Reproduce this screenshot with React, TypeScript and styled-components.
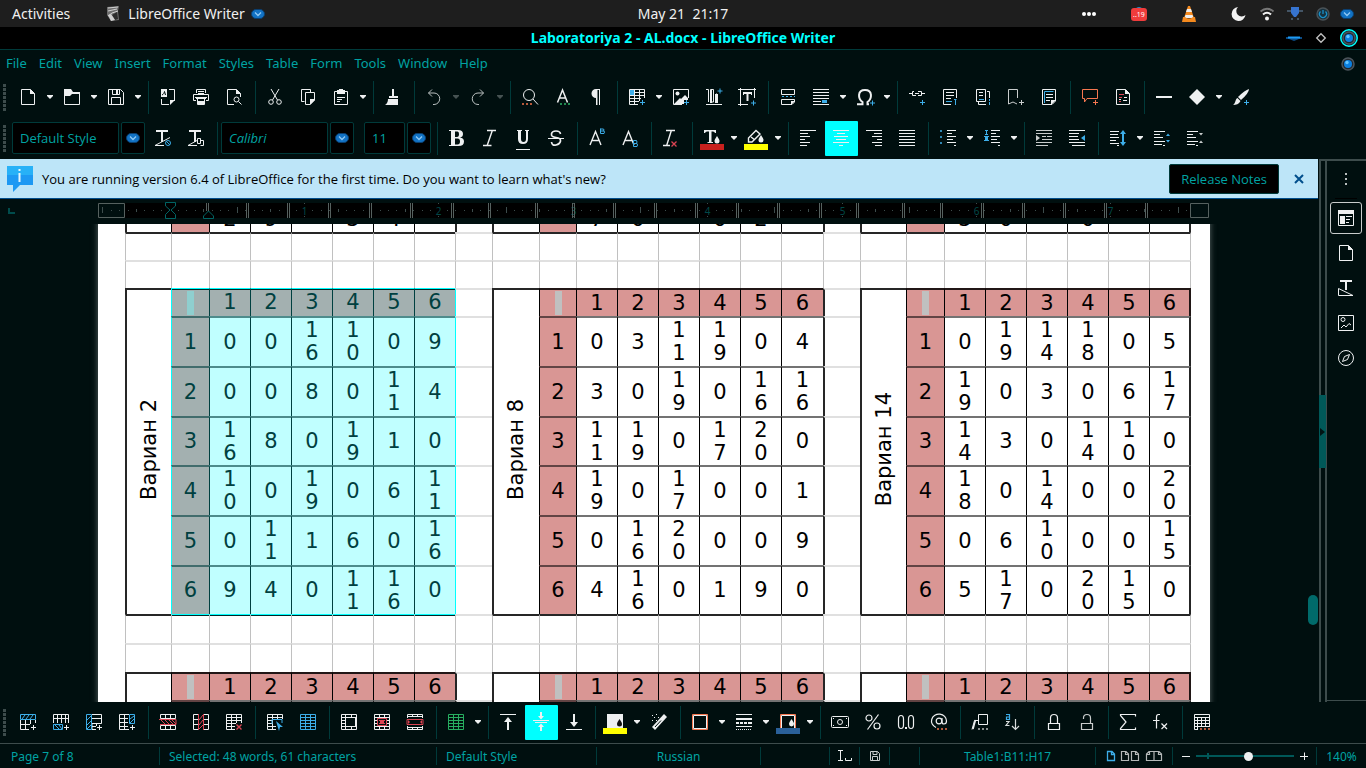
import React, { Fragment, ReactNode } from 'react';
import styled, { createGlobalStyle, css } from 'styled-components';

const c = {
  panel: '#000f0f',
  line: '#003a3a',
  text: '#00a3a3',
  grey: '#3d4c4c',
  white: '#eef0f1',
  blue: '#3daee9',
  red: '#da4453',
  green: '#27ae60',
  orange: '#f67750',
  cyan: '#00ffff',
  pink: '#d99694',
};

const Global = createGlobalStyle`
  * { box-sizing: border-box; }
  html, body { margin: 0; height: 100%; background: ${c.panel}; }
  body { font-family: "Noto Sans", sans-serif; font-size: 13px; color: ${c.text}; overflow: hidden; }
  button, input { font: inherit; color: inherit; margin: 0; }
  button { border: 0; background: none; padding: 0; }
`;

/* ---------- icon drawing helpers ---------- */

const s = (d: string, color = c.white, w = 1) => <path d={d} fill="none" stroke={color} strokeWidth={w} />;
const f = (d: string, color = c.white) => <path d={d} fill={color} />;
const px = (d: string, color = c.white) => <path d={d} fill={color} shapeRendering="crispEdges" />;
const plus = (x: number, y: number, color = c.blue) => s(`M${x} ${y - 2.5}v5M${x - 2.5} ${y}h5`, color);
const dots = (x: number, y: number, color: string) => px(`M${x} ${y}h2v2h-2zM${x + 4} ${y}h2v2h-2zM${x + 8} ${y}h2v2h-2z`, color);
const page = (
  <>
    {s('M1.5 .5H10.5L14.5 4.5V15.5H1.5Z')}
    {f('M10 0L15 5H10Z')}
  </>
);
const drop = (x: number, y: number, color = c.white) => f(`M${x} ${y}c2 3 2.5 4 2.5 5a2.5 2.5 0 0 1-5 0c0-1 .5-2 2.5-5z`, color);
const grid = (color = c.white) => s('M.5 .5H15.5V15.5H.5ZM.5 3.5H15.5M.5 6.5H15.5M.5 9.5H15.5M.5 12.5H15.5M5.5 .5V15.5M10.5 .5V15.5', color);

const icons: Record<string, ReactNode> = {
  'New': page,
  'Open': <>{s('M.5 1V15.5H15.5V3.5H9')}{f('M0 0H7L9 3H16V5H8L6 7H0Z')}</>,
  'Save': <>{s('M.5 .5H12.5L15.5 3.5V15.5H.5ZM3.5 15.5V8.5H12.5V15.5M4.5 .5V5.5H11.5V.5')}{f('M8 1h2v4h-2z')}</>,
  'Export as PDF': <>{f('M1 0H7V8H1Z')}{s('M2 6C4 5 4 4 4.500 2.500L5.500 6', c.panel)}{s('M9 .5H14.5V12M1.5 10V15.5H9')}{f('M10 11H15L10 16Z')}</>,
  'Print': <>{s('M3.5 4V.5H12.5V4M5 2.500H11M5 4.500H11M3 11.5H.5V5.5H15.500V11.500H13')}{f('M2 8H14V9H13V10H3V9H2Z')}{s('M4.500 10V15.500H11.500V10')}{f('M5 12H11V15H5Z')}</>,
  'Print Preview': <>{s('M14.5 8V4.5L10.500 .5H1.5V15.500H8')}{f('M10 0L15 5H10Z')}{s('M12.500 12.500L15.500 15.500')}<circle cx="10.500" cy="10.500" r="2.500" fill="none" stroke={c.white} /></>,
  'Cut': <>{s('M4 0L10.500 11M12 0L5.500 11')}<circle cx="4" cy="13" r="2.300" fill="none" stroke={c.white} /><circle cx="12" cy="13" r="2.300" fill="none" stroke={c.white} /></>,
  'Copy': <>{s('M4.500 12.500H1.500V.5H10.500V3')}{s('M5.5 3.5H14.5V11L10 15.5H5.500Z')}{f('M10 10H15V11L10 16Z')}</>,
  'Paste': <>{s('M1.500 2.500H14.500V15.500H1.500ZM4 8.500H12M4 10.500H9M4 12.500H7')}{f('M4 1H6V0H10V1H12V5H4Z')}</>,
  'Clone Formatting': <>{f('M7 0h2v7h4v2H4V7h3z')}{f('M3 10H13V16H0Q3 14 3 10Z')}</>,
  'Undo': <>{s('M6 .5L2.500 4L6 7.500M2.500 4H8A5.500 5.500 0 0 1 8 15.500H7', '#b9bfbf')}</>,
  'Redo': <>{s('M10 .5L13.500 4L10 7.500M13.500 4H8A5.500 5.500 0 0 0 8 15.500H9', '#b9bfbf')}</>,
  'Find and Replace': <><circle cx="7" cy="6" r="5.500" fill="none" stroke={c.white} />{s('M11 10L16 15.500')}{dots(0, 14, '#b5583a')}</>,
  'Spelling': <>{s('M2.500 13.500L7.500 1L12.500 13.500M4.500 9H10.500', c.white, 1.5)}{dots(5, 14, '#208a50')}</>,
  'Formatting Marks': f('M8 0H12V16H11V1H9.500V16H8V9A4.500 4.500 0 0 1 8 0Z'),
  'Table': <>{s('M15.500 9V.5H.5V15.500H9M.5 3.500H15.500M.5 6.500H15.500M.5 9.500H12M.5 12.500H10M5.500 .5V15.500M10.500 .5V12')}{f('M1 1H5V6H1Z', c.blue)}{plus(13.5, 13.5)}</>,
  'Image': <>{s('M15.500 9V.5H.5V15.500H9')}<circle cx="4.500" cy="4.500" r="2" fill={c.white} />{f('M1 15L7 9L8 10L12 6L15 9V11H11V15Z')}{plus(13.5, 13.5)}</>,
  'Chart': <>{s('M0 .5H2.500V13M4.500 13V.5H7.500V13ZM0 15.500H16M10.500 13V4.500')}{f('M4 1h2v13H4zM9 5h3v9H9z')}{plus(14, 2)}</>,
  'Text Box': <>{s('M1.500 -1V17M-1 .5H17M15.500 -1V9M-1 15.500H9')}{f('M4 3h9v3h-1V5H9.500v7H7.500V5H5v1H4z')}{plus(14.5, 14)}</>,
  'Page Break': <>{s('M1.500 5.500V.5H14.500V5.500ZM1.500 10.500H14.500V13L12 15.500H1.500Z')}{px('M2 7h2v1H2zM6 7h2v1H6zM10 7h2v1h-2zM14 7h1v1h-1z', c.blue)}{f('M11 12H15L11 16Z')}</>,
  'Field': <>{px('M0 0h16v1H0zM0 3h16v1H0zM0 6h16v1H0zM0 9h16v1H0zM0 12h8v1H0zM0 15h16v1H0z')}{px('M9 11h5v3H9z', c.blue)}</>,
  'Special Character': <>{s('M0 15.200H5.500V13C1 10 0 1 8 1S15 10 10.500 13V15.200H12', c.white, 2)}{plus(15.5, 14)}</>,
  'Hyperlink': <>{s('M0 4.500H3M5 2.500H3.500V6.500H7M9 2.500H12.500V6.500H9M6 4.500H10M13 4.500H16')}{plus(13.5, 13.5)}</>,
  'Footnote': <>{s('M14.500 9V.5H1.500V15.500H9M4 3.500H12M4 6.500H12M4 9.500H9')}{s('M4 12.500H10M12 10.500H14.500M13.500 10V16', c.blue)}</>,
  'Endnote': <>{s('M1.500 .5H10.500V12.500H1.500ZM12 2.500H14.500V9M3.500 13V15.500H11M4 3.500H8M4 6.500H8')}{s('M4 10.500H9M14.500 10V12M14.500 13V16', c.blue)}</>,
  'Bookmark': <>{s('M9.500 9V.5H.5V15L5 13L9 15', '#c9cdcd')}{plus(13.5, 13.5, '#c9cdcd')}</>,
  'Cross-reference': <>{s('M1.500 .5H14.500V12L11 15.500H1.500Z')}{s('M3.500 14V2.500H12.500', c.blue)}{s('M5 5.500H12M5 8.500H12M5 11.500H9')}{f('M10 11H15L10 16Z')}</>,
  'Comment': <>{s('M.5 .5H15.500V9.500H5L2.500 13V9.500H.5Z', c.orange)}{plus(13.5, 13.5, c.orange)}</>,
  'Track Changes': <>{page}{s('M4 10.500H6M9 8.500H12M8 11.500H12')}{s('M4 5.500H9M4 8.500H7M4 12.500H6', c.red)}</>,
  'Line': f('M0 7H16V9H0Z'),
  'Basic Shapes': f('M8 0L16 8L8 16L0 8Z'),
  'Show Draw Functions': <>{f('M16 0Q16 4 8 11L5 8Q12 1 16 0ZM4.500 9L7.500 12C6 15 3 16 0 16C3 14 2 10 4.500 9Z')}{plus(13.5, 13.5)}</>,

  'Update Style': <>{px('M1 0h12v2H8v10H6V2H1z')}{s('M0 15.500L15 7.500M0 15.500H9')}<circle cx="13" cy="13" r="2.500" fill="none" stroke={c.blue} />{s('M11 11L15 15', c.blue)}</>,
  'New Style': <>{px('M1 0h12v2H8v10H6V2H1z')}{s('M0 15.500L9 10.500M0 15.500H9M9.500 8.500H12.500V13.500H9.500ZM12.500 10.500H15.500V15.500H12.500')}</>,
  'Bold': f('M0 0H9Q14 0 14 4Q14 7 11 7.500Q15 8 15 11.500Q15 16 9.500 16H0V15H2V1H0ZM6 1.500V7H8Q10 7 10 4T8 1.500ZM6 8.500V14.500H8.500Q11 14.500 11 11.500T8.500 8.500Z'),
  'Italic': s('M5 .5H14M1 15.500H9.500M10.500 0L5 16', c.white, 1.400),
  'Underline': <>{f('M2 0H7V1H6V9Q6 12 8.500 12T11 9V1H10V0H14V1H13V9Q13 14 8 14T3 9V1H2Z')}{px('M1 19h14v1H1z')}</>,
  'Strikethrough': <>{s('M12.500 4Q12 1 8 1T3.500 4T8 7.500T12.500 11T8 15T3.500 12', c.white, 1.700)}{px('M0 8h16v1H0z')}</>,
  'Superscript': <>{s('M1 15L6.500 1.500L12 15M3 10.500H10', c.white, 1.400)}{s('M11.500 -1.500V3.500H15Q16 2 15 1H11.500M11.500 -1H14.500Q15.500 0 14.500 1', c.blue)}</>,
  'Subscript': <>{s('M1 15L6.500 1.500L12 15M3 10.500H10', c.white, 1.400)}{s('M11.500 10.500V16.500H15Q16 15 15 13.500H11.500M11.500 10.500H14.500Q15.500 12 14.500 13.500', c.blue)}</>,
  'Clear Formatting': <>{s('M3 .5H12M0 15.500H7M8.500 0L3.500 16', c.white, 1.400)}{s('M8.500 11.500L13.500 16.500M13.500 11.500L8.500 16.500', c.red, 1.300)}</>,
  'Font Color': <>{f('M0 0H12V3H11Q10.500 1.500 9 1.500H7.500V12H9V13H3.500V12H5V1.500H3Q1.500 1.500 1 3H0Z')}{drop(13, 6)}{px('M-4 14h24v6H-4z', '#c9211e')}</>,
  'Highlighting': <>{s('M.5 12V8L8 .5L12 4L4 12ZM3 7L7 10', c.white, 1.400)}{drop(13, 5)}{px('M-4 14h24v6H-4z', '#ffff00')}</>,
  'Align Left': px('M0 0h16v1H0zM0 3h8v1H0zM0 6h10v1H0zM0 9h5v1H0zM0 12h10v1H0zM0 15h7v1H0z'),
  'Center': px('M0 0h16v1H0zM4 3h8v1H4zM1 6h14v1H1zM3 9h10v1H3zM0 12h16v1H0zM6 15h4v1H6z'),
  'Align Right': px('M0 0h16v1H0zM8 3h8v1H8zM6 6h10v1H6zM11 9h5v1h-5zM6 12h10v1H6zM9 15h7v1H9z'),
  'Justified': px('M0 0h16v1H0zM0 3h16v1H0zM0 6h16v1H0zM0 9h16v1H0zM0 12h16v1H0zM0 15h16v1H0z'),
  'Bullets': <>{px('M7 0h9v1H7zM7 3h5v1H7zM7 6h9v1H7zM7 9h6v1H7zM7 12h9v1H7zM14 15h2v1h-2z')}{px('M0 0h2v2H0zM0 6h2v2H0zM0 12h2v2H0z', '#2f86b3')}</>,
  'Numbering': <>{px('M7 0h9v1H7zM7 3h5v1H7zM7 6h9v1H7zM7 9h6v1H7zM7 12h9v1H7zM14 15h2v1h-2z')}{px('M1 0h3v1H3v3h1v1H1V4h1V1H1zM0 6h5v1H4v3h1v1H0v-1h1V7H0zM2 7h1v3H2z', c.blue)}</>,
  'Increase Indent': <>{px('M0 0h16v1H0zM0 3h16v1H0zM6 6h4v1H6zM11 6h5v1h-5zM6 9h10v1H6zM0 12h16v1H0zM0 15h12v1H0z', '#c9cdcd')}{f('M0 5L4 8L0 11Z', '#c9cdcd')}</>,
  'Decrease Indent': <>{px('M0 0h16v1H0zM0 3h10v1H0zM0 6h9v1H0zM0 9h10v1H0zM0 12h16v1H0zM3 15h13v1H3z')}{f('M16 5L12 8L16 11Z', c.blue)}</>,
  'Line Spacing': <>{px('M0 1h9v1H0zM0 4h8v1H0zM0 7h9v1H0zM0 10h6v1H0zM0 13h9v1H0zM7 15h2v1H7z')}{s('M13 2V14', c.blue, 2)}{f('M10 4L13 0L16 4ZM10 12L13 16L16 12Z', c.blue)}</>,
  'Increase Paragraph Spacing': <>{px('M0 1h11v1H0zM0 4h6v1H0zM0 7h9v1H0zM0 11h11v1H0zM0 14h8v1H0zM9 15h2v1H9z')}{f('M12 6L14 3.500L16 6ZM12 10L14 12.500L16 10Z', c.blue)}</>,
  'Decrease Paragraph Spacing': <>{px('M0 1h11v1H0zM0 4h6v1H0zM0 7h9v1H0zM0 11h11v1H0zM0 14h8v1H0zM9 15h2v1H9z')}{f('M12 3L14 5.500L16 3ZM12 13L14 10.500L16 13Z', '#c9cdcd')}</>,

  'Insert Rows Above': <>{s('M.5 6V15.500H9M.5 10.500H10M5.500 6V15.500M10.500 6V10M15.500 6V9')}{s('M.5 .5H15.500V5.500H.5ZM2 5L5 1M6 5L9 1M10 5L13 1', c.blue)}{plus(13.5, 13.5, c.white)}</>,
  'Insert Rows Below': <>{s('M.5 9V.5H15.500V9M.5 4.500H15.500M4.500 .5V9M8.500 .5V9M12.500 .5V9')}{s('M.5 10.500H9.500V15.500H.5ZM2 11L6 15M6 11L9 15', c.blue)}{plus(13.5, 13.5, c.white)}</>,
  'Insert Columns Before': <>{s('M6 .5H15.500V9.500H6M6 4.500H15.500M6 9.500V15.500H10M6 12.500H10M10.500 9V12')}{s('M.5 .5H5.500V15.500H.5ZM1 6L5 2M1 11L5 7M1 15L5 11', c.blue)}{plus(13.5, 13.5, c.white)}</>,
  'Insert Columns After': <>{s('M10 .5H.5V15.500H10M.5 4.500H9M.5 8.500H9M.5 12.500H9M5.500 .5V15.500')}{s('M10.500 .5H15.500V9.500H10.500ZM11 5L15 2M11 9L15 5', c.blue)}{plus(13.5, 13.5, c.white)}</>,
  'Delete Rows': <>{s('M.5 .5H15.500V4.500H.5ZM5.500 .5V4.500M10.500 .5V4.500M.5 11.500H15.500V15.500H.5ZM5.500 11.500V15.500M10.500 11.500V15.500')}{s('M-1 5.500H16V10.500H0M1 6L5 10M5 6L9 10M9 6L13 10M12 6L16 10', c.red)}</>,
  'Delete Columns': <>{s('M5 .5H.5V15.500H5M.5 5.500H5M.5 10.500H5M11 .5H15.500V15.500H11M11 5.500H15.500M11 10.500H15.500')}{s('M5.500 0V16M10.500 0V16M6 6L10 1M6 11L10 6M6 15L10 11', c.red)}</>,
  'Delete Table': <>{s('M15.500 9V.5H.5V15.500H9M.5 3.500H15.500M.5 6.500H15.500M.5 9.500H10M.5 12.500H9M5.500 .5V15.500M10.500 .5V9')}{s('M10.500 10.500L15.500 15.500M15.500 10.500L10.500 15.500', c.red, 1.400)}</>,
  'Select Cell': <>{s('M15.500 5V.5H.5V15.500H9M.5 3.500H15.500M.5 6.500H6M.5 9.500H6M.5 12.500H9M5.500 .5V15.500M10.500 .5V5')}{s('M5 10V5.500H15V9', c.blue)}{f('M9 7L16 13H13L12 17Z', c.blue)}</>,
  'Select Table': grid(c.blue),
  'Merge Cells': <>{s('M.5 .5H15.500V15.500H.5ZM.5 3.500H15.500M.5 12.500H15.500M4.500 .5V15.500M.5 6.500H4.500M.5 9.500H4.500M10.500 .5V3.500M10.500 12.500V15.500M14.500 4V12')}</>,
  'Split Cells': <>{grid()}{px('M4 4h8v8H4z', c.panel)}{s('M3.500 4.500H12.500V11.500H3.500Z', c.red)}{px('M5 6h6v1h-1v2h1v1H5V9h1V7H5z', c.red)}</>,
  'Split Table': <>{s('M.5 4V.5H15.500V4M.5 2.500H15.500M5.500 .5V3M10.500 .5V3M.5 12V15.500H15.500V12M.5 13.500H15.500M5.500 13V15.500M10.500 13V15.500')}{s('M0 5.500H16V10.500H0Z', c.red)}{f('M1 6L3 8L1 10ZM15 6L13 8L15 10Z', c.red)}</>,
  'AutoFormat': grid(c.green),
  'Align Top': <>{px('M0 0h16v1H0zM7 5h2v11H7z')}{f('M4 8L8 3L12 8Z')}</>,
  'Center Vertically': <>{px('M0 6h16v1H0zM2 8h12v1H2zM7 -2h2v4H7zM7 13h2v4H7z')}{f('M5 2H11L8 5.500ZM5 13H11L8 9.500Z')}</>,
  'Align Bottom': <>{px('M0 15h16v1H0zM7 0h2v9H7z')}{f('M4 8L8 13L12 8Z')}</>,
  'Cell Background': <>{f('M0 0H16V14H0Z')}{drop(12.5, 5, '#111')}{px('M-4 14h24v6H-4z', '#ffff00')}</>,
  'AutoFormat Styles': <>{f('M13 0L16 3L4 16L1 13Z')}{s('M4 13L10 6.500', c.panel)}{px('M1 1h1v1H1zM5 0h1v1H5zM3 3h1v1H3zM7 3h1v1H7zM1 6h1v1H1zM5 6h1v1H5z')}</>,
  'Borders': <>{s('M.5 .5H15.500V15.500H.5Z', c.orange)}{s('M1.500 1.500H14.500V14.500H1.500Z')}</>,
  'Border Style': <>{px('M0 0h16v1H0zM0 4h16v2H0zM0 8h3v2H0zM4 8h3v2H4zM8 8h3v2H8zM12 8h4v2h-4zM0 12h16v1H0zM0 15h1v1H0zM2 15h1v1H2zM4 15h1v1H4zM6 15h1v1H6zM8 15h1v1H8zM10 15h1v1h-1zM12 15h1v1h-1zM14 15h1v1h-1z')}</>,
  'Border Color': <>{s('M.5 14V.5H15.500V14', c.orange)}{s('M1.500 14V1.500H14.500V14')}{drop(11.5, 5)}{px('M-4 14h24v6H-4z', '#2a6099')}</>,
  'Currency': <><rect x="-.5" y="2.500" width="17" height="11" rx="1" fill="none" stroke={c.white} /><circle cx="8" cy="8" r="2.500" fill="none" stroke={c.white} />{px('M1 4h1v1H1zM14 4h1v1h-1zM1 11h1v1H1zM14 11h1v1h-1z')}</>,
  'Percent': <>{s('M13.500 .5L2.500 15.500', c.white, 1.200)}<circle cx="4" cy="4" r="3" fill="none" stroke={c.white} strokeWidth="1.200" /><circle cx="12" cy="12" r="3" fill="none" stroke={c.white} strokeWidth="1.200" /></>,
  'Decimal': <>{s('M.5 5Q.5 1.500 3 1.500T5.500 5V11Q5.500 14.500 3 14.500T.5 11ZM10.500 5Q10.500 1.500 13 1.500T15.500 5V11Q15.500 14.500 13 14.500T10.500 11Z', c.white, 1.200)}{px('M7 13h2v2H7z')}</>,
  'Number Format': <><circle cx="8" cy="7" r="2.800" fill="none" stroke={c.white} strokeWidth="1.200" />{s('M11 4V8Q11 10 13 10Q15.500 10 15.500 7A7.500 7 0 1 0 5 13.500', c.white, 1.200)}{dots(6, 14, '#b5583a')}</>,
  'Caption': <>{s('M6.500 .5H15.500V10.500H6.500ZM0 15.500L2.500 6.500H7')}{s('M1 15L3.500 6', c.white, 1.500)}{dots(6, 14, '#8a9090')}</>,
  'Sort': <>{s('M1 .5H4.500V5.500H1.500V3H4', c.blue, 1.200)}{s('M1 7.500H4L1 11.500H4.500M10.500 5V15M7 12L10.500 15.500L14 12', '#d8dcdc', 1.200)}</>,
  'Protect': <>{s('M2.500 9.500H13.500V15.500H2.500ZM4.500 9V4Q4.500 .5 8 .5T11.500 4V9', c.white, 1.200)}</>,
  'Unprotect': <>{s('M2.500 9.500H13.500V15.500H2.500ZM11.500 9V4Q11.500 .5 8 .5T4.500 4V5', '#c9cdcd', 1.200)}</>,
  'Sum': s('M15.500 2.500V.5H.5V1.500L6 8L.5 14.500V15.500H15.500V13.500', c.white, 1.200),
  'Formula': <>{s('M7 .5H5.500Q3.500 .5 3.500 3V14.500M0 6.500H6.500', c.white, 1.200)}{s('M8.500 9.500L14 15M14 9.500L8.500 15', c.white, 1.200)}</>,
  'Table Properties': <>{s('M.5 13V.5H15.500V13M.5 3.500H15.500M.5 6.500H15.500M.5 9.500H15.500M.5 12.500H15.500M3.500 3.500V15.500M7.500 3.500V13M11.500 3.500V13M.5 12.500V15.500H4')}{dots(6, 14, '#b5583a')}</>,

  'Sidebar Settings': px('M7 2h2v2H7zM7 7h2v2H7zM7 12h2v2H7z', '#b9bfbf'),
  'Properties': <>{s('M.5 1V15.500H15.500V1')}{f('M0 0H16V4H0ZM2 6H7V14H2Z')}{px('M8 6h6v1H8zM8 9h4v1H8zM8 12h3v1H8z')}</>,
  'Page': page,
  'Styles': <>{px('M2 0h12v2H9v8H7V2H2z')}{s('M.5 8.500V15.500H15L.5 8.500')}</>,
  'Gallery': <>{s('M.5 .5H15.500V15.500H.5ZM3 13L6 10L8 12L11 8.500L13 10')}<circle cx="5" cy="4.500" r="2" fill="none" stroke={c.white} /></>,
  'Navigator': <><circle cx="8" cy="8" r="7.500" fill="none" stroke={c.white} />{s('M11.500 4.500L9.500 9.500L4.500 11.500L6.500 6.500Z')}</>,
};

const Svg = styled.svg`
  display: block;
  flex: none;
  overflow: visible;
`;

const Icon = ({ name }: { name: string }) => (
  <Svg width="16" height="16" viewBox="0 0 16 16" aria-hidden="true">{icons[name]}</Svg>
);

const Gem = () => (
  <Svg width="14" height="10" viewBox="0 0 14 10" aria-hidden="true">
    <rect x=".5" y=".5" width="13" height="9" rx="4.500" fill="#1272c4" stroke="#0b3f70" />
    <path d="M4 3.500L7 6.500L10 3.500" fill="none" stroke="#8fc9f5" strokeWidth="1.300" />
  </Svg>
);

const Orb = ({ ring }: { ring?: boolean }) => (
  <Svg width="18" height="18" viewBox="0 0 18 18" aria-hidden="true">
    {ring && <circle cx="9" cy="9" r="8.200" fill="#102a33" stroke={c.cyan} strokeWidth="1.500" />}
    <circle cx="9" cy="9" r="6" fill="#20262c" stroke="#4c555c" strokeWidth="1.500" />
    <circle cx="9" cy="9" r="4" fill="#0b7fe0" />
    <circle cx="8" cy="7.500" r="1.700" fill="#62c4ff" />
  </Svg>
);

/* ---------- window chrome ---------- */

const Window = styled.div`
  display: flex;
  flex-direction: column;
  height: 100vh;
  background: ${c.panel};
`;

const TopBar = styled.header`
  display: grid;
  grid-template-columns: 1fr auto 1fr;
  align-items: center;
  height: 27px;
  flex: none;
  background: #1e1e1e;
  color: #f0f0f0;
  font-size: 14px;
`;

const TopLeft = styled.div`
  display: flex;
  align-items: center;
  padding-left: 12px;
`;

const AppButton = styled.button`
  display: flex;
  align-items: center;
  gap: 6px;
  margin-left: 36px;
`;

const Clock = styled.time`
  white-space: pre;
`;

const Tray = styled.div`
  display: flex;
  justify-content: flex-end;
  padding-right: 9px;
`;

const TrayCell = styled.div<{ $w: number }>`
  width: ${p => p.$w}px;
  display: flex;
  align-items: center;
  justify-content: center;
`;

const TrayGroup = styled.div`
  display: flex;
  margin-left: 11px;
`;

const TitleBar = styled.div`
  display: grid;
  grid-template-columns: 1fr auto 1fr;
  align-items: center;
  height: 23px;
  flex: none;
  background: #000;
  border-bottom: 1px solid ${c.line};
`;

const Title = styled.h1`
  grid-column: 2;
  margin: 0;
  font-size: 14px;
  font-weight: 700;
  line-height: 22px;
  color: ${c.cyan};
`;

const WindowButtons = styled.div`
  display: flex;
  justify-content: flex-end;
  align-items: center;
  gap: 14px;
  padding-right: 8px;
`;

const MenuBar = styled.nav`
  display: flex;
  align-items: center;
  height: 27px;
  flex: none;
  padding-right: 9px;
`;

const MenuItem = styled.button`
  padding: 0 6px;
  line-height: 29px;
`;

const MenuClose = styled.button`
  margin-left: auto;
`;

/* ---------- toolbars ---------- */

const Bar = styled.div<{ $ruled?: boolean }>`
  display: flex;
  align-items: center;
  height: ${p => (p.$ruled ? 42 : 41)}px;
  flex: none;
  padding-bottom: 1px;
  border-bottom: ${p => (p.$ruled ? `1px solid ${c.grey}` : '0')};
`;

const Grip = styled.div`
  width: 3px;
  height: 27px;
  margin: 0 6px 0 3px;
  flex: none;
  background: repeating-linear-gradient(${c.grey} 0 3px, transparent 3px 4px);
`;

const ToolButton = styled.button<{ $menu?: boolean }>`
  display: flex;
  align-items: center;
  gap: 11px;
  flex: none;
  width: ${p => (p.$menu ? 44 : 33)}px;
  height: 35px;
  padding-left: 8px;
  border-radius: 1px;
  &[aria-pressed='true'] { background: ${c.cyan}; }
`;

const Divider = styled.div`
  width: 1px;
  height: 33px;
  margin: 0 3px 0 4px;
  flex: none;
  background: ${c.line};
`;

const Tools = styled.div`
  display: flex;
  align-items: center;
`;

const Arrow = ({ dim }: { dim?: boolean }) => (
  <Svg width="6" height="4" viewBox="0 0 6 4" aria-hidden="true">
    <path d="M0 0H6V1L3 4L0 1Z" fill={dim ? '#465252' : c.white} />
  </Svg>
);

/* "|" is a divider, "name+" has a menu, "name*" is switched on */
const ToolSet = ({ items }: { items: string[] }) => (
  <Tools>
    {items.map((item, i) => {
      if (item === '|') return <Divider key={i} />;
      const menu = item.endsWith('+');
      const on = item.endsWith('*');
      const name = menu || on ? item.slice(0, -1) : item;
      return (
        <ToolButton key={i} type="button" aria-label={name} aria-pressed={on || undefined} $menu={menu}>
          <Icon name={name} />
          {menu && <Arrow dim={name === 'Undo' || name === 'Redo'} />}
        </ToolButton>
      );
    })}
  </Tools>
);

const standard = ['New+', 'Open+', 'Save+', '|', 'Export as PDF', 'Print', 'Print Preview', '|', 'Cut', 'Copy', 'Paste+', '|',
  'Clone Formatting', '|', 'Undo+', 'Redo+', '|', 'Find and Replace', 'Spelling', 'Formatting Marks', '|', 'Table+', 'Image',
  'Chart', 'Text Box', '|', 'Page Break', 'Field+', 'Special Character+', '|', 'Hyperlink', 'Footnote', 'Endnote', 'Bookmark',
  'Cross-reference', '|', 'Comment', 'Track Changes', '|', 'Line', 'Basic Shapes+', 'Show Draw Functions'];
const formatting = ['|', 'Bold', 'Italic', 'Underline', 'Strikethrough', '|', 'Superscript', 'Subscript', '|', 'Clear Formatting', '|',
  'Font Color+', 'Highlighting+', '|', 'Align Left', 'Center*', 'Align Right', 'Justified', '|', 'Bullets+', 'Numbering+', '|',
  'Increase Indent', 'Decrease Indent', '|', 'Line Spacing+', 'Increase Paragraph Spacing', 'Decrease Paragraph Spacing'];
const tableTools = ['Insert Rows Above', 'Insert Rows Below', 'Insert Columns Before', 'Insert Columns After', '|', 'Delete Rows',
  'Delete Columns', 'Delete Table', '|', 'Select Cell', 'Select Table', '|', 'Merge Cells', 'Split Cells', 'Split Table', '|',
  'AutoFormat+', '|', 'Align Top', 'Center Vertically*', 'Align Bottom', '|', 'Cell Background+', 'AutoFormat Styles', '|',
  'Borders+', 'Border Style+', 'Border Color+', '|', 'Currency', 'Percent', 'Decimal', 'Number Format', '|', 'Caption', 'Sort',
  '|', 'Protect', 'Unprotect', '|', 'Sum', 'Formula', '|', 'Table Properties'];

const Combo = styled.div<{ $w: number }>`
  display: flex;
  gap: 2px;
  flex: none;
  width: ${p => p.$w}px;
  height: 32px;
  margin-right: 2px;
  font-family: "Open Sans", "Noto Sans", sans-serif;
`;

const comboBox = css`
  border: 1px solid ${c.line};
  border-radius: 2px;
  background: #000;
`;

const ComboInput = styled.input<{ $italic?: boolean }>`
  ${comboBox}
  flex: 1;
  min-width: 0;
  padding: 0 7px;
  font-style: ${p => (p.$italic ? 'italic' : 'normal')};
`;

const ComboButton = styled.button`
  ${comboBox}
  width: 24px;
  display: flex;
  align-items: center;
  justify-content: center;
`;

const ComboGap = styled.div`
  width: 8px;
  flex: none;
`;

const ComboField = ({ label, value, width, italic }: { label: string; value: string; width: number; italic?: boolean }) => (
  <Combo $w={width}>
    <ComboInput aria-label={label} defaultValue={value} $italic={italic} />
    <ComboButton type="button" aria-label={`${label} list`}><Gem /></ComboButton>
  </Combo>
);

const StyleCombos = styled.div`
  display: flex;
  align-items: center;
`;

/* ---------- work area ---------- */

const Work = styled.div`
  display: flex;
  flex: 1;
  min-height: 0;
`;

const Editor = styled.main`
  display: flex;
  flex-direction: column;
  flex: 1;
  min-width: 0;
`;

const InfoBar = styled.div`
  display: flex;
  align-items: center;
  height: 40px;
  flex: none;
  padding: 0 14px 0 7px;
  background: #bde5f8;
  border-bottom: 1px solid #004e8c;
  color: #000;
  font-family: "Open Sans", "Noto Sans", sans-serif;
`;

const InfoText = styled.span`
  flex: 1;
  margin-left: 9px;
`;

const NotesButton = styled.button`
  height: 30px;
  padding: 0 11px;
  background: #000;
  border: 1px solid ${c.line};
  border-radius: 2px;
  color: ${c.text};
`;

const CloseInfo = styled.button`
  margin-left: 15px;
`;

const RulerRow = styled.div`
  display: grid;
  grid-template-columns: 1fr 1112px 1fr;
  height: 25px;
  flex: none;
  padding-right: 10px;
`;

const TabStop = styled.div`
  width: 7px;
  height: 6px;
  margin: 9px 0 0 8px;
  border: solid #004c4c;
  border-width: 0 0 2px 2px;
`;

const Canvas = styled.div`
  display: flex;
  flex: 1;
  min-height: 0;
`;

const Viewport = styled.div`
  flex: 1;
  min-width: 0;
  overflow: hidden;
  display: flex;
  justify-content: center;
  align-items: flex-start;
`;

/* The page is scrolled so that its previous row is cut by the ruler */
const Sheet = styled.article`
  flex: none;
  width: 1112px;
  margin-top: -42px;
  padding: 0 0 60px 27px;
  background: #fff;
  box-shadow: 0 0 6px #5c6868;
`;

const ScrollTrack = styled.div`
  width: 10px;
  flex: none;
  display: flex;
  flex-direction: column;
`;

const ScrollSpace = styled.div<{ $grow: number }>`
  flex: ${p => p.$grow};
`;

const ScrollThumb = styled.div`
  height: 30px;
  border-radius: 5px;
  background: #006a6a;
`;

/* ---------- document table ---------- */

const Matrices = styled.table`
  table-layout: fixed;
  width: 1066px;
  border-collapse: separate;
  border-spacing: 0;
  font-family: "DejaVu Sans", sans-serif;
  font-size: 21px;
  line-height: 23px;
  color: #000;
`;

const Row = styled.tr<{ $h: number }>`
  height: ${p => p.$h}px;
`;

type Edge = 'light' | 'thin' | 'thick' | 'select';

const topEdge: Record<Edge, string> = {
  light: '2px solid #e0e0e0',
  thin: '2px solid rgba(0, 0, 0, 0.55)',
  thick: '2px solid rgba(0, 0, 0, 0.85)',
  select: '1px solid #00ffff',
};
const sideEdge: Record<Edge, string> = {
  light: '1px solid #c0c0c0',
  thin: '1px solid #000',
  thick: '2px solid rgba(0, 0, 0, 0.85)',
  select: '1px solid #00ffff',
};

const Cell = styled.td<{ $top: Edge; $left: Edge; $head?: boolean; $sel?: boolean; $last?: Edge }>`
  padding: 0 8px;
  text-align: center;
  vertical-align: middle;
  word-break: break-all;
  font-weight: 400;
  border-top: ${p => topEdge[p.$top]};
  border-left: ${p => sideEdge[p.$left]};
  border-right: ${p => (p.$last ? sideEdge[p.$last] : '0')};
  background: ${p => (p.$head ? c.pink : 'transparent')};
  box-shadow: ${p => (p.$top === 'select' ? 'inset 0 1px #002828' : 'none')};
  ${p => p.$sel && css`
    color: #004040;
    background: ${p.$head ? '#a3b0b0' : '#c0ffff'};
    border-top-color: ${p.$top === 'select' ? '#00ffff' : 'rgba(0, 64, 64, 0.6)'};
    border-left-color: ${p.$left === 'select' ? '#00ffff' : '#004040'};
  `}
`;

const Label = styled.span`
  display: inline-block;
  writing-mode: vertical-rl;
  transform: rotate(180deg);
  white-space: nowrap;
`;

const FieldMark = styled.span<{ $sel?: boolean }>`
  display: inline-block;
  vertical-align: top;
  width: 7px;
  height: 24px;
  background: ${p => (p.$sel ? '#8fcfcf' : '#c0c0c0')};
`;

const columns = [46, 38, 41, 41, 41, 41, 41, 41, 37, 47, 37, 41, 41, 41, 41, 41, 42, 37, 46, 38, 41, 41, 41, 41, 41, 42];

type Block = { label: string; selected?: boolean; rows: string[][] };

const blocks: Block[] = [
  { label: 'Вариан 2', selected: true, rows: ['0 0 16 10 0 9', '0 0 8 0 11 4', '16 8 0 19 1 0', '10 0 19 0 6 11', '0 11 1 6 0 16', '9 4 0 11 16 0'].map(r => r.split(' ')) },
  { label: 'Вариан 8', rows: ['0 3 11 19 0 4', '3 0 19 0 16 16', '11 19 0 17 20 0', '19 0 17 0 0 1', '0 16 20 0 0 9', '4 16 0 1 9 0'].map(r => r.split(' ')) },
  { label: 'Вариан 14', rows: ['0 19 14 18 0 5', '19 0 3 0 6 17', '14 3 0 14 10 0', '18 0 14 0 0 20', '0 6 10 0 0 15', '5 17 0 20 15 0'].map(r => r.split(' ')) },
];
const rowHeights = [50, 50, 49, 50, 50, 49];
const previous = ['12 19 0 13 14 0', '17 10 0 10 12 0', '13 10 0 10 0 0'].map(r => r.split(' '));

const SpacerRow = ({ height, under, selected }: { height: number; under?: boolean; selected?: boolean }) => (
  <Row $h={height}>
    {columns.map((_, i) => {
      const blockEdge: Edge = selected && i > 0 && i < 8 ? 'select' : 'thick';
      return <Cell key={i} $top={under && i % 9 !== 8 ? blockEdge : 'light'} $left="light" $last={i === 25 ? 'light' : undefined} />;
    })}
  </Row>
);

const BlockRow = ({ height, index, span }: { height: number; index: number; span?: number }) => (
  <Row $h={height}>
    {blocks.map((b, n) => {
      const whole = span === rowHeights.length + 1;
      const sel = b.selected && whole;
      const top: Edge = index < 0 ? 'thick' : 'thin';
      const values = index < 0 ? ['1', '2', '3', '4', '5', '6'] : b.rows[index];
      return (
        <Fragment key={n}>
          {index < 0 && <Cell as="th" rowSpan={span} $top="thick" $left="thick">{whole && <Label>{b.label}</Label>}</Cell>}
          <Cell as="th" $head $sel={sel} $top={sel && index < 0 ? 'select' : top} $left={sel ? 'select' : 'thin'}>
            {index < 0 ? <FieldMark $sel={sel} /> : index + 1}
          </Cell>
          {values.map((v, i) => (
            <Cell key={i} $head={index < 0} $sel={sel} $top={sel && index < 0 ? 'select' : top} $left="thin"
              $last={n === 2 && i === 5 ? 'thick' : undefined}>{v}</Cell>
          ))}
          {n < 2 && <Cell $top="light" $left={sel ? 'select' : 'thick'} />}
        </Fragment>
      );
    })}
  </Row>
);

const DocumentTable = () => (
  <Matrices>
    <colgroup>{columns.map((w, i) => <col key={i} width={w} />)}</colgroup>
    <tbody>
      <Row $h={50}>
        {previous.map((values, n) => (
          <Fragment key={n}>
            <Cell $top="thin" $left="thick" />
            <Cell as="th" $head $top="thin" $left="thin">6</Cell>
            {values.map((v, i) => (
              <Cell key={i} $top="thin" $left="thin" $last={n === 2 && i === 5 ? 'thick' : undefined}>{v}</Cell>
            ))}
            {n < 2 && <Cell $top="light" $left="thick" />}
          </Fragment>
        ))}
      </Row>
      <SpacerRow height={28} under />
      <SpacerRow height={28} />
      <BlockRow height={28} index={-1} span={7} />
      {rowHeights.map((h, i) => <BlockRow key={i} height={h} index={i} span={7} />)}
      <SpacerRow height={29} under selected />
      <SpacerRow height={29} />
      <BlockRow height={28} index={-1} span={2} />
      <BlockRow height={50} index={0} />
    </tbody>
  </Matrices>
);

/* ---------- ruler ---------- */

const edges = columns.reduce<number[]>((acc, w) => [...acc, acc[acc.length - 1] + w], [27]);

const Ruler = () => {
  const inch = 134.4;
  const ticks: ReactNode[] = [];
  for (let i = -8; i < 122; i++) {
    const x = Math.round(71.5 + (i * inch) / 16) + 0.5;
    if (i > 0 && i % 16 === 0) {
      ticks.push(<text key={i} x={x} y="16" textAnchor="middle" fontSize="10" fill="#004848">{i / 16}</text>);
      ticks.push(<path key={`m${i}`} d={`M${x} 4v1M${x} 17v1`} stroke={c.grey} />);
    } else {
      const h = i % 8 === 0 ? 6 : i % 4 === 0 ? 3 : 1;
      ticks.push(<path key={i} d={`M${x} ${11 - Math.floor(h / 2)}v${h}`} stroke={c.grey} />);
    }
  }
  return (
    <Svg width="1112" height="25" viewBox="0 0 1112 25" fontFamily="Noto Sans, sans-serif" role="img" aria-label="Ruler">
      <path d="M0 4H1092V19H0Z" fill="#000" />
      <path d="M.5 4.500H26.500V18.500H.5ZM1092.500 4.500H1110.500V18.500H1092.500Z" fill={c.panel} stroke="#56615f" />
      {ticks}
      {edges.slice(3, -1).map(x => <path key={x} d={`M${x - 3.5} 4V19M${x - 1.5} 4V19`} stroke="#56615f" />)}
      <path d="M67.500 3.500H77.500V7L73 11L77.500 15.500V19.500H67.500V15.500L72 11L67.500 7ZM110.500 12L115.500 17V19.500H105.500V17Z" fill="#000" stroke="#006464" />
      <path d="M108.500 4V12M110.500 4V12" stroke="#56615f" />
    </Svg>
  );
};

/* ---------- sidebar ---------- */

const Splitter = styled.div`
  width: 9px;
  flex: none;
  padding-left: 1px;
`;

const SplitLines = styled.div`
  display: flex;
  align-items: center;
  height: 100%;
  border: solid ${c.grey};
  border-width: 2px 2px 0 2px;
`;

const SplitHandle = styled.button`
  width: 7px;
  height: 73px;
  margin: 0 -1px 0 -2px;
  flex: none;
  display: flex;
  align-items: center;
  justify-content: center;
  background: #005858;
`;

const SideBar = styled.aside`
  display: flex;
  flex-direction: column;
  align-items: center;
  gap: 3px;
  width: 39px;
  flex: none;
  margin-bottom: 1px;
  padding: 2px 1px 0 0;
  border: solid ${c.grey};
  border-width: 2px 0 1px 0;
`;

const SideButton = styled.button<{ $active?: boolean }>`
  display: flex;
  align-items: center;
  justify-content: center;
  width: 32px;
  height: 32px;
  border: 1px solid ${p => (p.$active ? '#c8cccc' : 'transparent')};
  border-radius: 3px;
`;

const SideRule = styled.div`
  width: 22px;
  height: 1px;
  background: #000;
`;

/* ---------- status bar ---------- */

const Status = styled.footer`
  display: flex;
  align-items: center;
  height: 24px;
  flex: none;
  padding-left: 2px;
`;

const StatusField = styled.div<{ $w: number; $grow?: number; $center?: boolean; $end?: boolean }>`
  display: flex;
  align-items: center;
  justify-content: ${p => (p.$center ? 'center' : 'flex-start')};
  flex: ${p => p.$grow || 0} 0 ${p => p.$w}px;
  height: 18px;
  padding-left: ${p => (p.$center ? 0 : 9)}px;
  border-right: ${p => (p.$end ? '0' : `1px solid ${c.line}`)};
  font-size: 12px;
  white-space: nowrap;
`;

const ViewButton = styled.button`
  margin-right: 6px;
`;

const Zoom = styled.input`
  appearance: none;
  width: 98px;
  height: 10px;
  margin: 0 6px;
  background: linear-gradient(#005858, #005858) center / 100% 2px no-repeat,
    linear-gradient(#005858, #005858) 11px center / 2px 6px no-repeat;
  &::-webkit-slider-thumb {
    appearance: none;
    width: 9px;
    height: 9px;
    border-radius: 5px;
    background: #eef0f1;
  }
`;

const menus = ['File', 'Edit', 'View', 'Insert', 'Format', 'Styles', 'Table', 'Form', 'Tools', 'Window', 'Help'];
const g = '#b4b8b8';

export default function App() {
  return (
    <Window>
      <Global />
      <TopBar>
        <TopLeft>
          <button type="button">Activities</button>
          <AppButton type="button">
            <Svg width="16" height="16" viewBox="0 0 16 16" aria-hidden="true">
              <path d="M1 1L13 0L12 5L13 14L5 15L1 9Z" fill="#6e6e6e" />
              <path d="M2 2L12 1M2 5L11 3M2 10L6 7L12 5" stroke="#d0d0d0" fill="none" />
              <path d="M6 9L11 6L12 13L9 14Z" fill="#2c2c2c" />
              <path d="M2 9L5 8L9 14L5 15Z" fill="#cfcfcf" />
            </Svg>
            LibreOffice Writer
            <Gem />
          </AppButton>
        </TopLeft>
        <Clock>May 21  21:17</Clock>
        <Tray>
          <TrayCell $w={50}><Svg width="14" height="4" viewBox="0 0 14 4"><path d="M2 2h.01M7 2h.01M12 2h.01" stroke="#fff" strokeWidth="4" strokeLinecap="round" /></Svg></TrayCell>
          <TrayCell $w={50}>
            <Svg width="16" height="16" viewBox="0 0 16 16" fontFamily="Noto Sans, sans-serif">
              <path d="M4 3Q8-1 12 3Z" fill="#2a8fd0" /><rect y="2" width="16" height="13" rx="3" fill="#f03c3c" />
              <text x="8" y="11" fontSize="7" fill="#fff" textAnchor="middle">..19</text>
            </Svg>
          </TrayCell>
          <TrayCell $w={50}>
            <Svg width="16" height="16" viewBox="0 0 16 16">
              <path d="M7 0H9L13 12H3Z" fill="#f58a1e" /><path d="M6 3H10L11 6H5ZM4.500 9H11.500L12.500 12H3.500Z" fill="#eee" />
              <path d="M2 11H4Q8 14 12 11H14L15 16H1Z" fill="#f58a1e" />
            </Svg>
          </TrayCell>
          <TrayGroup>
            <TrayCell $w={28}><Svg width="14" height="14" viewBox="0 0 14 14"><path d="M6 0A5 5 0 0 0 13.500 8A7 7 0 1 1 6 0Z" fill="#f2f2f2" /></Svg></TrayCell>
            <TrayCell $w={28}>
              <Svg width="14" height="14" viewBox="0 0 14 14">
                <path d="M.5 4.500Q7-1 13.500 4.500" stroke="#777" fill="none" strokeWidth="1.800" /><path d="M3 7.500Q7 4 11 7.500" stroke="#f2f2f2" fill="none" strokeWidth="2" />
                <circle cx="7" cy="11.500" r="2" fill="#f2f2f2" />
              </Svg>
            </TrayCell>
            <TrayCell $w={28}>
              <Svg width="16" height="14" viewBox="0 0 16 14"><path d="M0 4H16" stroke="#456" strokeWidth="2" /><path d="M4 0H12V6L9 10H7L4 6Z" fill="#3674d0" /><path d="M4 12H6M10 12H12" stroke="#456" strokeWidth="2" /></Svg>
            </TrayCell>
            <TrayCell $w={28}>
              <Svg width="14" height="14" viewBox="0 0 14 14"><circle cx="7" cy="7" r="6" fill="#17323f" stroke="#4a5257" strokeWidth="1.500" /><path d="M7 3V7M4.500 4.500A3.500 3.500 0 1 0 9.500 4.500" fill="none" stroke="#1a90c8" strokeWidth="1.300" /></Svg>
            </TrayCell>
            <TrayCell $w={20}><Gem /></TrayCell>
          </TrayGroup>
        </Tray>
      </TopBar>

      <TitleBar>
        <Title>Laboratoriya 2 - AL.docx - LibreOffice Writer</Title>
        <WindowButtons>
          <button type="button" aria-label="Minimize"><Svg width="16" height="6" viewBox="0 0 16 6"><path d="M0 2H16V4H13L8 6L3 4H0Z" fill="#0b4c86" /><path d="M2 2.500H14" stroke="#1e9bf5" strokeWidth="2" /></Svg></button>
          <button type="button" aria-label="Maximize"><Svg width="10" height="10" viewBox="0 0 10 10"><path d="M5 .7L9.300 5L5 9.300L.7 5Z" fill="none" stroke="#c4c4c4" strokeWidth="1.300" /></Svg></button>
          <button type="button" aria-label="Close"><Orb ring /></button>
        </WindowButtons>
      </TitleBar>

      <MenuBar>
        {menus.map(m => <MenuItem key={m} type="button">{m}</MenuItem>)}
        <MenuClose type="button" aria-label="Close document"><Orb /></MenuClose>
      </MenuBar>

      <Bar><Grip /><ToolSet items={standard} /></Bar>
      <Bar>
        <Grip />
        <StyleCombos>
          <ComboField label="Paragraph style" value="Default Style" width={133} />
          <ToolSet items={['Update Style', 'New Style', '|']} />
          <ComboField label="Font name" value="Calibri" width={133} italic />
          <ComboGap />
          <ComboField label="Font size" value="11" width={67} />
        </StyleCombos>
        <ToolSet items={formatting} />
      </Bar>

      <Work>
        <Editor>
          <InfoBar>
            <Svg width="26" height="26" viewBox="0 0 26 26" aria-hidden="true">
              <path d="M0 0H26V19H13L6 26V19H0Z" fill="#1d99f3" /><path d="M0 0H26V9H0Z" fill="#27b1f7" />
              <path d="M12.500 7V16" stroke="#e8f6fd" strokeWidth="2" /><path d="M11.500 3h2v2h-2z" fill="#e8f6fd" />
            </Svg>
            <InfoText>You are running version 6.4 of LibreOffice for the first time. Do you want to learn what's new?</InfoText>
            <NotesButton type="button">Release Notes</NotesButton>
            <CloseInfo type="button" aria-label="Close infobar"><Svg width="10" height="10" viewBox="0 0 10 10"><path d="M1 1L9 9M9 1L1 9" stroke="#004e8c" strokeWidth="2" /></Svg></CloseInfo>
          </InfoBar>
          <RulerRow><TabStop /><Ruler /></RulerRow>
          <Canvas>
            <Viewport><Sheet><DocumentTable /></Sheet></Viewport>
            <ScrollTrack><ScrollSpace $grow={371} /><ScrollThumb /><ScrollSpace $grow={77} /></ScrollTrack>
          </Canvas>
        </Editor>
        <Splitter>
          <SplitLines>
            <SplitHandle type="button" aria-label="Hide sidebar"><Svg width="5" height="8" viewBox="0 0 5 8"><path d="M0 0L5 4L0 8Z" fill="#001414" /></Svg></SplitHandle>
          </SplitLines>
        </Splitter>
        <SideBar>
          <SideButton type="button" aria-label="Sidebar Settings"><Icon name="Sidebar Settings" /></SideButton>
          <SideRule />
          <SideButton type="button" $active aria-label="Properties"><Icon name="Properties" /></SideButton>
          {['Page', 'Styles', 'Gallery', 'Navigator'].map(n => (
            <SideButton key={n} type="button" aria-label={n}><Icon name={n} /></SideButton>
          ))}
        </SideBar>
      </Work>

      <Bar $ruled><Grip /><ToolSet items={tableTools} /></Bar>

      <Status>
        <StatusField $w={158}>Page 7 of 8</StatusField>
        <StatusField $w={277} $grow={1}>Selected: 48 words, 61 characters</StatusField>
        <StatusField $w={160}>Default Style</StatusField>
        <StatusField $w={164} $center>Russian</StatusField>
        <StatusField $w={69} />
        <StatusField $w={30} $center><Svg width="14" height="12" viewBox="0 0 14 12"><path d="M0 .5H5M0 10.500H5M2.500 .5V10.500M7.500 8V10.500H13.500V8" stroke={c.white} fill="none" /></Svg></StatusField>
        <StatusField $w={30} $center><Svg width="10" height="10" viewBox="0 0 10 10"><path d="M.5 .5H7.500L9.500 2.500V9.500H.5ZM2.500 9V5.500H7.500V9M3 .5V3.500H7V.5" fill="none" stroke="#c9cdcd" /></Svg></StatusField>
        <StatusField $w={30} />
        <StatusField $w={176} $center>Table1:B11:H17</StatusField>
        <StatusField $w={77} $center>
          <ViewButton type="button" aria-label="Single page"><Svg width="8" height="10" viewBox="0 0 8 10"><path d="M.5 .5H5L7.500 3V9.500H.5ZM4.500 .5V3.500H7.500" fill="none" stroke={c.blue} strokeWidth="1.300" /></Svg></ViewButton>
          <ViewButton type="button" aria-label="Multiple pages"><Svg width="19" height="10" viewBox="0 0 19 10"><path d="M.5 .5H5L7.500 3V9.500H.5ZM4.500 .5V3.500H7.500M10.500 .5H15L17.500 3V9.500H10.500ZM14.500 .5V3.500H17.500" fill="none" stroke={g} strokeWidth="1.200" /></Svg></ViewButton>
          <button type="button" aria-label="Book view"><Svg width="16" height="10" viewBox="0 0 16 10"><path d="M8 .5V9.500M8 .5H3L.5 3V9.500H15.500V3L13 .5ZM3.500 .5V3.500H.5M12.500 .5V3.500H15.500" fill="none" stroke={g} strokeWidth="1.200" /></Svg></button>
        </StatusField>
        <StatusField $w={144} $center>
          <button type="button" aria-label="Zoom out"><Svg width="8" height="8" viewBox="0 0 8 8"><path d="M0 4.500H8" stroke={c.white} /></Svg></button>
          <Zoom type="range" aria-label="Zoom" min="0" max="100" defaultValue="54" />
          <button type="button" aria-label="Zoom in"><Svg width="8" height="8" viewBox="0 0 8 8"><path d="M0 4.500H8M4.500 .5V8" stroke={c.white} /></Svg></button>
        </StatusField>
        <StatusField $w={49} $center $end>140%</StatusField>
      </Status>
    </Window>
  );
}
